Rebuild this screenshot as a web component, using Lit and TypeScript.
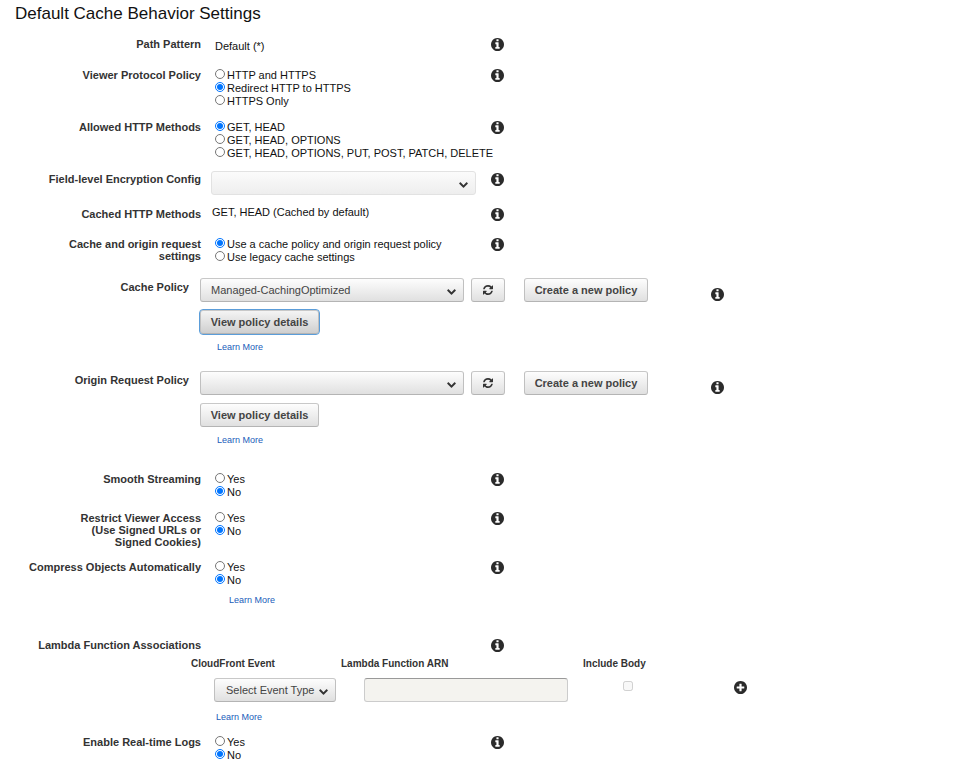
import { LitElement, html, css, svg, nothing } from "lit";
import type { TemplateResult } from "lit";
import { customElement } from "lit/decorators.js";
import { classMap } from "lit/directives/class-map.js";

const DISC =
  "M1664 896q0 209-103 385.5t-279.5 279.5-385.5 103-385.5-103-279.5-279.5-103-385.5 103-385.5 279.5-279.5 385.5-103 385.5 103 279.5 279.5 103 385.5z";

const ICONS = {
  info: "M1152 1376v-160q0-14-9-23t-23-9h-96v-512q0-14-9-23t-23-9h-320q-14 0-23 9t-9 23v160q0 14 9 23t23 9h96v320h-96q-14 0-23 9t-9 23v160q0 14 9 23t23 9h448q14 0 23-9t9-23zM1024 480v-160q0-14-9-23t-23-9h-192q-14 0-23 9t-9 23v160q0 14 9 23t23 9h192q14 0 23-9t9-23z" + DISC,
  plus: "M1344 960v-128q0-26-19-45t-45-19h-256v-256q0-26-19-45t-45-19h-128q-26 0-45 19t-19 45v256h-256q-26 0-45 19t-19 45v128q0 26 19 45t45 19h256v256q0 26 19 45t45 19h128q26 0 45-19t19-45v-256h256q26 0 45-19t19-45z" + DISC,
  refresh: "M1639 1056q0 5-1 7-64 268-268 434.5t-478 166.5q-146 0-282.5-55t-243.5-157l-129 129q-19 19-45 19t-45-19-19-45v-448q0-26 19-45t45-19h448q26 0 45 19t19 45-19 45l-137 137q71 66 161 102t187 36q134 0 250-65t186-179q11-17 53-117 8-23 30-23h192q13 0 22.5 9.5t9.5 22.5zm25-800v448q0 26-19 45t-45 19h-448q-26 0-45-19t-19-45 19-45l138-138q-148-137-349-137-134 0-250 65t-186 179q-11 17-53 117-8 23-30 23h-199q-13 0-22.5-9.5t-9.5-22.5v-7q65-268 270-434.5t480-166.5q146 0 284 55.5t245 156.5l130-129q19-19 45-19t45 19 19 45z",
  chevron: "M1683 808l-742 741q-19 19-45 19t-45-19l-742-741q-19-19-19-45.5t19-45.5l166-165q19-19 45-19t45 19l531 531 531-531q19-19 45-19t45 19l166 165q19 19 19 45.5t-19 45.5z",
};

type IconName = keyof typeof ICONS;

const icon = (name: IconName) => html`
  <svg class="icon ${name}" viewBox="${name === "chevron" ? "64 512 1664 1088" : "128 128 1536 1536"}" aria-hidden="true">
    ${svg`<path fill-rule="evenodd" d=${ICONS[name]}></path>`}
  </svg>`;

@customElement("app-root")
export class AppRoot extends LitElement {
  static styles = css`
    :host {
      display: block;
      background: #fff;
      color: #111;
      font: 11px/13px "Liberation Sans", Arial, sans-serif;
    }
    * { box-sizing: border-box; }
    form { padding-bottom: 6px; }
    h1 {
      margin: 0;
      padding: 4px 15px 0;
      font-size: 17px;
      line-height: 20px;
      font-weight: 400;
    }
    .row {
      display: grid;
      grid-template-columns: minmax(0, 201fr) minmax(0, 290fr) minmax(0, 480fr);
      margin-top: 13px;
    }
    .row.first { margin-top: 14px; margin-bottom: 16px; }
    .row.raised { margin-top: 11px; }
    .row.raised .name, .row.raised .hint { margin-top: 2px; }
    .row.loose { margin-bottom: 17px; }
    .row.section { margin-top: 33px; }
    .name {
      color: #333;
      font-weight: 700;
      line-height: 12px;
      text-align: right;
      white-space: pre-line;
    }
    .value { padding-left: 14px; }
    .value.near { padding-left: 11px; }
    .value.text { padding-top: 2px; }
    .option {
      display: flex;
      align-items: center;
      gap: 2px;
      height: 13px;
      white-space: nowrap;
    }
    .option input { width: 10px; height: 10px; margin: 0 0 3px; }
    .icon { display: block; fill: #2b2b2b; }
    .info, .plus { width: 13px; height: 13px; }
    .refresh { width: 10px; height: 10px; fill: #333; }
    .hint {
      display: block;
      width: 13px;
      height: 13px;
      border: 0;
      padding: 0;
      background: none;
    }
    .picker { display: grid; align-items: center; }
    .picker select, .picker .chevron { grid-area: 1 / 1; }
    .picker .chevron {
      justify-self: end;
      width: 9px;
      height: 6px;
      margin-right: 8px;
      margin-top: 3px;
      pointer-events: none;
      fill: #333;
    }
    select, .button {
      height: 24px;
      margin: 0;
      border: 1px solid;
      border-color: #c8c8c8 #c0c0c0 #b4b4b4;
      border-radius: 3px;
      background: linear-gradient(#fdfdfd, #e0e0e0);
      color: #444;
      font: inherit;
    }
    select { appearance: none; width: 100%; padding: 0 20px 0 10px; }
    select:disabled {
      border-color: #e2e2e2;
      background: linear-gradient(#fbfbfb, #eee);
      opacity: 1;
    }
    .encryption { width: 265px; margin-left: -1px; }
    .button {
      display: flex;
      align-items: center;
      justify-content: center;
      padding: 0 10px;
      font-weight: 700;
      white-space: nowrap;
    }
    .row.policy {
      grid-template-columns: minmax(0, 189fr) minmax(0, 522fr) minmax(0, 260fr);
      margin-top: 14px;
      margin-bottom: 18px;
    }
    .policy .name { padding-top: 3px; }
    .policy .value { padding-left: 11px; }
    .policy .hint { margin-top: 10px; }
    .policy + .row:not(.policy) { margin-top: 27px; }
    .line { display: flex; gap: 7px; margin-bottom: 8px; }
    .line .picker { width: 264px; }
    .line .reload { width: 34px; }
    .line .create { width: 124px; margin-left: 12px; }
    .view { width: 119px; }
    .view.active {
      outline: 1px solid #5b9dd9;
      background: linear-gradient(#f4f4f4, #cfcfcf);
    }
    .more {
      display: block;
      width: fit-content;
      color: #1a5dba;
      font-size: 9px;
      line-height: 12px;
      text-decoration: none;
    }
    .policy .more { margin: 7px 0 0 17px; }
    .option ~ .more { margin: 7px 0 0 14px; }
    .lambda { display: grid; grid-template-columns: minmax(0, 191fr) minmax(0, 780fr); }
    .events { grid-column: 2; }
    table { width: 100%; table-layout: fixed; border-collapse: collapse; }
    th, td { padding: 0; text-align: left; }
    th { color: #333; font-size: 10px; line-height: 12px; padding-top: 6px; }
    td { padding-top: 8px; }
    .c-event { width: 150px; }
    .c-arn { width: 242px; }
    .c-body { width: 90px; }
    td.inset { padding-left: 23px; }
    .event-type { width: 122px; }
    .event-type select { padding-left: 11px; }
    .arn {
      display: block;
      width: 204px;
      height: 24px;
      border: 1px solid #ccc;
      border-top-color: #999;
      border-radius: 3px;
      background: #f4f3ef;
      font: inherit;
    }
    td.body { text-align: center; }
    .include { display: block; width: 10px; height: 10px; margin: 0 auto 8px; }
    td.add { padding-left: 61px; }
    td.add .hint { margin-bottom: 6px; }
    .events .more { margin: 9px 0 0 25px; }
  `;

  private hint(topic: string) {
    return html`<button class="hint" type="button" aria-label="Help: ${topic}">${icon("info")}</button>`;
  }

  private radios(id: string, options: string[], chosen: number) {
    return options.map(
      (text, i) => html`<label class="option">
        <input type="radio" name=${id} .checked=${i === chosen} /><span>${text}</span>
      </label>`
    );
  }

  private choice(id: string, name: string, options: string[], chosen: number, more?: TemplateResult) {
    return html`<div class="row" role="radiogroup" aria-labelledby=${id}>
      <div class="name" id=${id}>${name}</div>
      <div class="value">${this.radios(id, options, chosen)}${more ?? nothing}</div>
      ${this.hint(name)}
    </div>`;
  }

  private policy(id: string, name: string, selected: string, active: boolean) {
    return html`<div class="row policy">
      <label class="name" for=${id}>${name}</label>
      <div class="value">
        <div class="line">
          <div class="picker">
            <select id=${id}><option>${selected}</option></select>${icon("chevron")}
          </div>
          <button class="button reload" type="button" aria-label="Refresh">${icon("refresh")}</button>
          <button class="button create" type="button">Create a new policy</button>
        </div>
        <button class=${classMap({ button: true, view: true, active })} type="button">View policy details</button>
        ${this.more()}
      </div>
      ${this.hint(name)}
    </div>`;
  }

  private more() {
    return html`<a class="more" href="#">Learn More</a>`;
  }

  render() {
    const yesNo = ["Yes", "No"];
    return html`
      <form>
        <h1>Default Cache Behavior Settings</h1>
        <div class="row first">
          <div class="name">Path Pattern</div>
          <div class="value text">Default (*)</div>
          ${this.hint("Path Pattern")}
        </div>
        ${this.choice("viewer", "Viewer Protocol Policy", ["HTTP and HTTPS", "Redirect HTTP to HTTPS", "HTTPS Only"], 1)}
        ${this.choice("methods", "Allowed HTTP Methods", ["GET, HEAD", "GET, HEAD, OPTIONS", "GET, HEAD, OPTIONS, PUT, POST, PATCH, DELETE"], 0)}
        <div class="row raised">
          <label class="name" for="encryption">Field-level Encryption Config</label>
          <div class="value near">
            <div class="picker encryption">
              <select id="encryption" disabled></select>${icon("chevron")}
            </div>
          </div>
          ${this.hint("Field-level Encryption Config")}
        </div>
        <div class="row raised loose">
          <div class="name">Cached HTTP Methods</div>
          <div class="value near">GET, HEAD (Cached by default)</div>
          ${this.hint("Cached HTTP Methods")}
        </div>
        ${this.choice("origin", "Cache and origin request\nsettings", ["Use a cache policy and origin request policy", "Use legacy cache settings"], 0)}
        ${this.policy("cache-policy", "Cache Policy", "Managed-CachingOptimized", true)}
        ${this.policy("origin-policy", "Origin Request Policy", "", false)}
        ${this.choice("smooth", "Smooth Streaming", yesNo, 1)}
        ${this.choice("restrict", "Restrict Viewer Access\n(Use Signed URLs or\nSigned Cookies)", yesNo, 1)}
        ${this.choice("compress", "Compress Objects Automatically", yesNo, 1, this.more())}
        <div class="row section">
          <div class="name">Lambda Function Associations</div>
          <div></div>
          ${this.hint("Lambda Function Associations")}
        </div>
        <div class="lambda">
          <div class="events">
            <table>
              <thead>
                <tr>
                  <th class="c-event" id="h-event">CloudFront Event</th>
                  <th class="c-arn" id="h-arn">Lambda Function ARN</th>
                  <th class="c-body" id="h-body">Include Body</th>
                  <th></th>
                </tr>
              </thead>
              <tbody>
                <tr>
                  <td class="inset">
                    <div class="picker event-type">
                      <select aria-labelledby="h-event"><option>Select Event Type</option></select>${icon("chevron")}
                    </div>
                  </td>
                  <td class="inset"><input class="arn" type="text" aria-labelledby="h-arn" disabled /></td>
                  <td class="body"><input class="include" type="checkbox" aria-labelledby="h-body" disabled /></td>
                  <td class="add"><button class="hint" type="button" aria-label="Add association">${icon("plus")}</button></td>
                </tr>
              </tbody>
            </table>
            ${this.more()}
          </div>
        </div>
        ${this.choice("logs", "Enable Real-time Logs", yesNo, 1)}
      </form>
    `;
  }
}
